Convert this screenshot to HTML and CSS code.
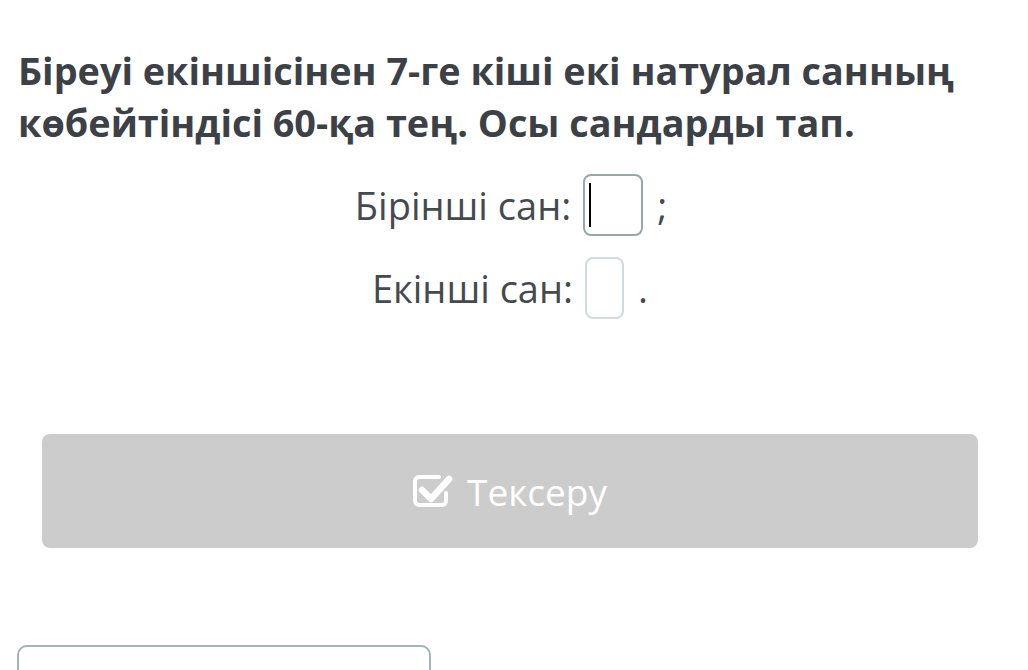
FILE: index.html
```html
<!DOCTYPE html>
<html lang="kk">
<head>
<meta charset="utf-8">
<link rel="stylesheet" href="styles.css">
</head>
<body>
<div class="page">
  <h1 class="title">Біреуі екіншісінен 7-ге кіші екі натурал санның көбейтіндісі 60-қа тең. Осы сандарды тап.</h1>
  <div class="answers">
    <div class="row row1"><span>Бірінші сан:</span><span class="box box-active"><span class="caret"></span></span><span class="punct">;</span></div>
    <div class="row row2"><span>Екінші сан:</span><span class="box box-small"></span><span class="punct">.</span></div>
  </div>
  <div class="check-btn">
    <svg class="icon" viewBox="0 0 40 36" width="40" height="36">
      <path d="M33 20 V28 a4 4 0 0 1 -4 4 H6 a4 4 0 0 1 -4 -4 V8 a4 4 0 0 1 4 -4 H26" fill="none" stroke="#fff" stroke-width="4" stroke-linecap="round"/>
      <path d="M9 17 L18 26 L36 6" fill="none" stroke="#fff" stroke-width="6.5" stroke-linecap="round" stroke-linejoin="round"/>
    </svg>
    <span>Тексеру</span>
  </div>
  <div class="bottom-box"></div>
</div>
</body>
</html>
```
FILE: styles.css
```css
html, body {
  margin: 0;
  padding: 0;
  background: #fff;
}
.page {
  font-family: "Open Sans", "Noto Sans", sans-serif;
  color: #3c4148;
  padding: 45px 0 0 18px;
  width: 1010px;
  height: 625px;
  overflow: hidden;
}
.title {
  margin: 0;
  font-size: 37.8px;
  font-weight: 700;
  line-height: 52px;
  width: 990px;
}
.answers {
  margin-top: 25px;
  display: flex;
  flex-direction: column;
  align-items: center;
  gap: 21px;
  font-size: 38px;
  color: #444a50;
  padding-right: 24px;
}
.row {
  display: flex;
  align-items: center;
  gap: 12px;
  height: 62px;
}
.row1 { margin-left: 0; }
.row2 { margin-left: -2px; }
.box {
  display: inline-block;
  box-sizing: border-box;
  height: 62px;
  border-radius: 8px;
  position: relative;
}
.box-active {
  width: 60px;
  border: 2px solid #94aaaa;
}
.caret {
  position: absolute;
  left: 4px;
  top: 7px;
  width: 2px;
  height: 44px;
  background: #000;
}
.box-small {
  width: 39px;
  border: 2px solid #cfdcdd;
}
.punct { margin-left: 2px; }
.check-btn {
  margin: 115px 0 0 24px;
  width: 936px;
  height: 114px;
  background: #cccccc;
  border-radius: 8px;
  display: flex;
  align-items: center;
  justify-content: center;
  gap: 14px;
  color: #fff;
  font-size: 37px;
  box-sizing: border-box;
}
.icon { display: block; }
.bottom-box {
  margin-top: 97px;
  margin-left: -1px;
  width: 414px;
  height: 60px;
  box-sizing: border-box;
  border: 2px solid #a7b3b7;
  border-radius: 10px;
}
```
